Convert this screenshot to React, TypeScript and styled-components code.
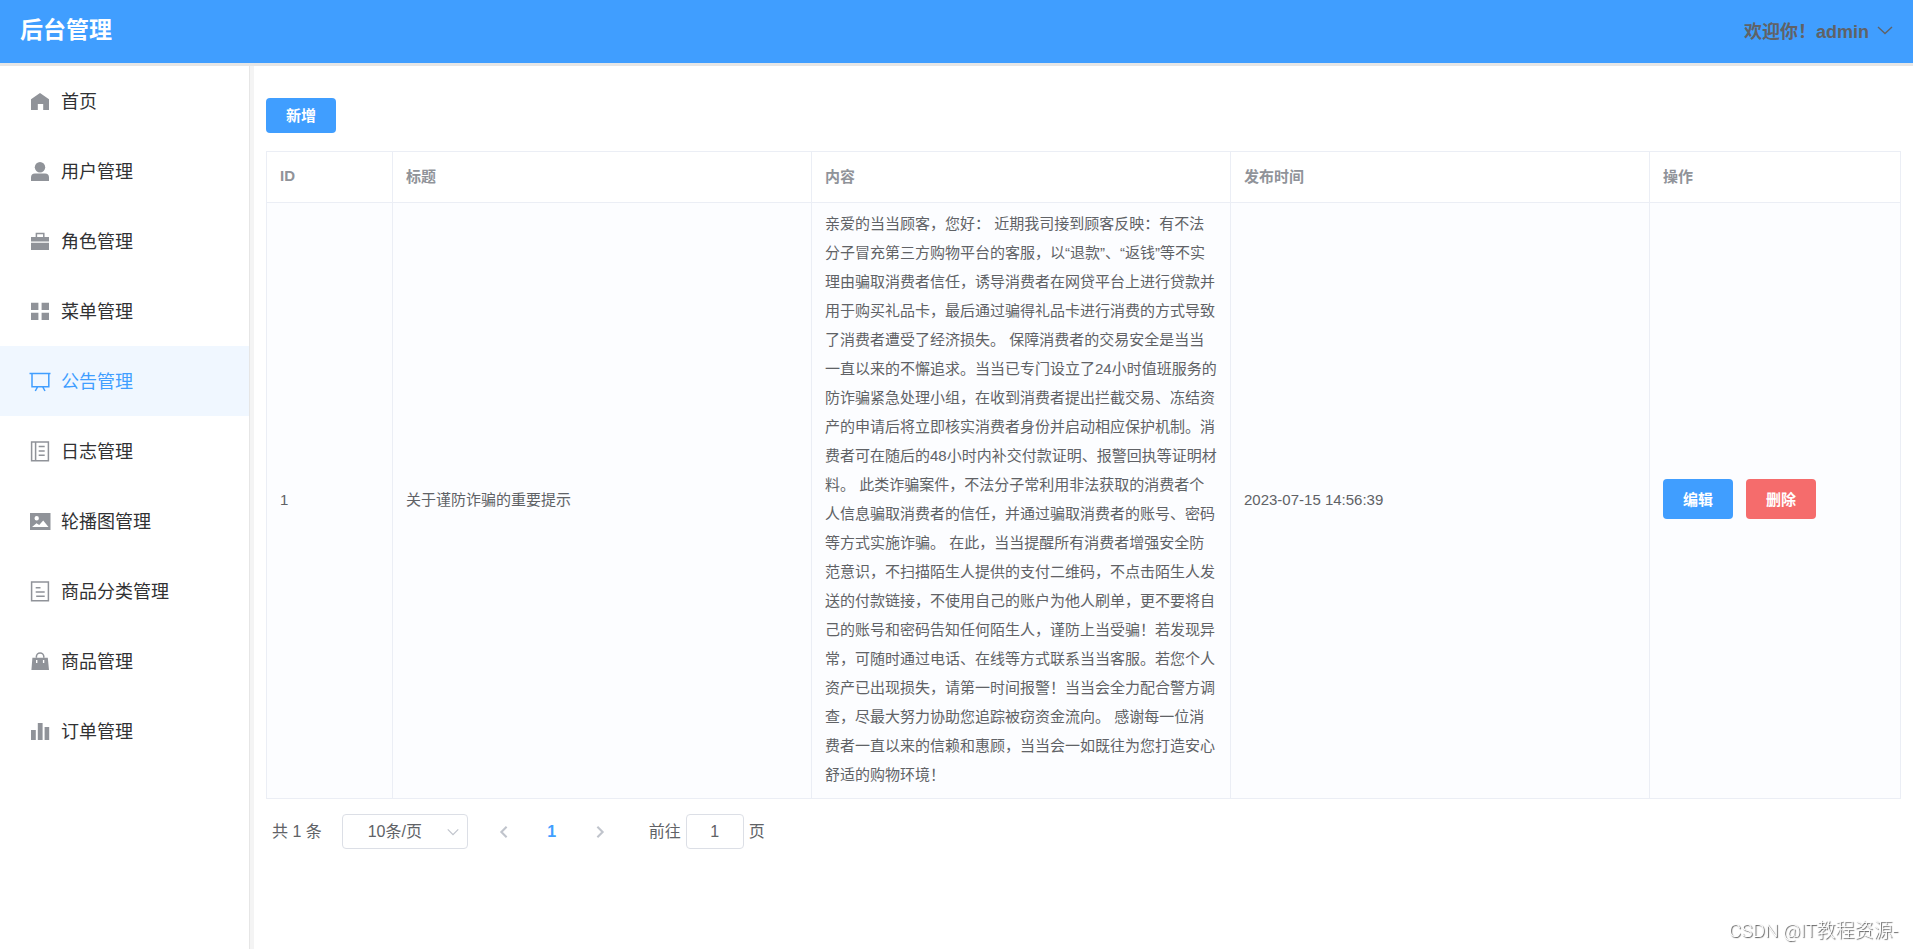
import React from 'react';
import styled, { createGlobalStyle } from 'styled-components';

const GlobalStyle = createGlobalStyle`
  *, *::before, *::after { box-sizing: border-box; }
  body {
    margin: 0;
    background: #fff;
    color: #606266;
    font-family: "Liberation Sans", "Noto Sans CJK SC", sans-serif;
    font-size: 15px;
  }
  button, input, select { font-family: inherit; }
`;

const Page = styled.div`
  display: flex;
  flex-direction: column;
  min-height: 100vh;
`;

const Header = styled.header`
  display: flex;
  align-items: center;
  justify-content: space-between;
  height: 66px;
  padding: 0 20px 4px;
  background: #409eff;
  border-bottom: 3px solid #e6e6e6;
`;

const Title = styled.h1`
  margin: 0;
  font-size: 23px;
  line-height: 32px;
  color: #fff;
`;

const UserButton = styled.button`
  display: flex;
  align-items: center;
  gap: 8px;
  padding: 0;
  border: 0;
  background: none;
  color: #606266;
  font-size: 18px;
  font-weight: 700;
  cursor: pointer;
`;

const Body = styled.div`
  display: flex;
  flex: 1;
`;

const Sidebar = styled.nav`
  flex: 0 0 250px;
  border-right: 1px solid #e6e6e6;
`;

const MenuList = styled.ul`
  margin: 0;
  padding: 0;
  list-style: none;
`;

const MenuLink = styled.a<{ $active: boolean }>`
  display: flex;
  align-items: center;
  gap: 10px;
  height: 70px;
  padding-left: 29px;
  font-size: 18px;
  text-decoration: none;
  color: ${(p) => (p.$active ? '#409eff' : '#303133')};
  background: ${(p) => (p.$active ? '#f0f7ff' : 'transparent')};

  svg {
    color: ${(p) => (p.$active ? '#409eff' : '#909399')};
  }
`;

const MenuLabel = styled.span`
  padding-bottom: 2px;
`;

const Main = styled.main`
  flex: 1;
  min-width: 0;
  padding: 32px 12px;
  border-left: 4px solid #f4f4f4;
`;

const Button = styled.button<{ $tone?: 'primary' | 'danger'; $tall?: boolean }>`
  width: 70px;
  height: ${(p) => (p.$tall ? 40 : 35)}px;
  padding: 0 0 2px;
  border: 0;
  border-radius: 4px;
  background: ${(p) => (p.$tone === 'danger' ? '#f56c6c' : '#409eff')};
  color: #fff;
  font-size: 15px;
  font-weight: 700;
  cursor: pointer;
`;

const Table = styled.table`
  width: 100%;
  margin-top: 18px;
  table-layout: fixed;
  border-collapse: separate;
  border-spacing: 0;
  border-top: 1px solid #ebeef5;
  border-left: 1px solid #ebeef5;
`;

const Col = styled.col<{ $width?: number }>`
  width: ${(p) => (p.$width ? `${p.$width}px` : 'auto')};
`;

const HeadCell = styled.th`
  height: 51px;
  padding: 0 11px 3px 13px;
  border-right: 1px solid #ebeef5;
  border-bottom: 1px solid #ebeef5;
  color: #909399;
  text-align: left;
  font-weight: 700;
`;

const Cell = styled.td`
  padding: 6px 11px 9px 13px;
  border-right: 1px solid #ebeef5;
  border-bottom: 1px solid #ebeef5;
  background: #fcfdff;
  line-height: 29px;
  vertical-align: middle;
`;

const Actions = styled.div`
  display: flex;
  gap: 13px;
`;

const Pagination = styled.div`
  display: flex;
  align-items: center;
  margin-top: 15px;
  padding-left: 6px;
  font-size: 16px;
  line-height: 35px;
`;

const SelectBox = styled.div`
  display: grid;
  align-items: center;
  width: 126px;
  margin: 0 18px 0 20px;

  > * { grid-area: 1 / 1; }
  > svg { justify-self: end; margin-right: 8px; color: #c0c4cc; pointer-events: none; }
`;

const Select = styled.select`
  appearance: none;
  width: 100%;
  height: 35px;
  padding: 0 20px 0 0;
  border: 1px solid #dcdfe6;
  border-radius: 4px;
  background: #fff;
  color: #606266;
  font-size: 16px;
  text-align: center;
  text-align-last: center;
`;

const PageButton = styled.button<{ $current?: boolean }>`
  display: flex;
  align-items: center;
  justify-content: center;
  width: 36px;
  height: 35px;
  padding: 0;
  border: 0;
  background: none;
  color: ${(p) => (p.$current ? '#409eff' : '#c0c4cc')};
  font-size: 16px;
  font-weight: 700;
`;

const Pager = styled.div`
  display: flex;
  gap: 12px;
`;

const Jump = styled.label`
  display: flex;
  gap: 5px;
  margin-left: 31px;
`;

const PageInput = styled.input`
  width: 58px;
  height: 35px;
  padding: 0;
  border: 1px solid #dcdfe6;
  border-radius: 4px;
  color: #606266;
  font-size: 16px;
  text-align: center;
`;

const Watermark = styled.div`
  position: fixed;
  right: 15px;
  bottom: 5px;
  color: #fff;
  font-family: Roboto, "Noto Sans CJK SC", sans-serif;
  font-size: 19px;
  font-weight: 300;
  line-height: 26px;
  text-shadow: 1px 1px 1px #555;
`;

const line = { fill: 'none', stroke: 'currentColor', strokeWidth: 1.5 };

const icons: Record<string, React.ReactNode> = {
  home: <path d="M11 3 20 9.2V20H14.2V14H8.8V20H2V9.2Z" />,
  user: (
    <>
      <circle cx="11" cy="7.2" r="5.2" />
      <path d="M2 21v-3.5a4 4 0 0 1 4-4h10a4 4 0 0 1 4 4V21Z" />
    </>
  ),
  briefcase: (
    <>
      <path d="M7.4 7.5V3.4h7.4v4.1" {...line} />
      <path d="M2 7h18v4.4H2zM2 12.8h18V20H2z" />
    </>
  ),
  grid: <path d="M2 2.8h7.4V10H2zM12.6 2.8H20V10h-7.4zM2 12.8h7.4V20H2zM12.6 12.8H20V20h-7.4z" />,
  board: <path d="M.5 3.5h21M3 3.5V16.7H19.8V3.5M8.7 16.7 6.3 21M13.6 16.7 16 21" {...line} />,
  notebook: <path d="M2.6 2h16.8v18.8H2.6zM6.6 2v18.8M9.7 6.6h6M9.7 11h6M9.7 15.2h6" {...line} />,
  picture: (
    <path
      fillRule="evenodd"
      d="M1 3h20.5v17H1zM7.7 6a2.2 2.2 0 1 0 0 4.4 2.2 2.2 0 0 0 0-4.4zM3 17h16.5l-5.3-6.6-4 4.5-2.7-1.7z"
    />
  ),
  tickets: <path d="M2.6 2h16.8v18.8H2.6zM6.7 7.7h4.8M6.7 12h9M7.2 16.2h8.5" {...line} />,
  goods: (
    <>
      <path d="M7.4 7.8V6.6a3.7 3.7 0 0 1 7.4 0v1.2" {...line} />
      <path fillRule="evenodd" d="M3.4 7.8h15.4L20 20H2.4zM7 10v3h1.4v-3zM13.9 10v3h1.4v-3z" />
    </>
  ),
  chart: <path d="M2 10h4.8v10H2zM8.8 3h4.8v17H8.8zM15.6 7h4.6v13h-4.6z" />,
};

const MenuIcon = ({ name }: { name: string }) => (
  <svg width="22" height="22" viewBox="0 0 22 22" fill="currentColor" aria-hidden="true">
    {icons[name]}
  </svg>
);

const Chevron = ({ d, size, width }: { d: string; size: number; width: number }) => (
  <svg width={size} height={size} viewBox="0 0 16 16" fill="none" stroke="currentColor" strokeWidth={width} aria-hidden="true">
    <path d={d} />
  </svg>
);

const menu = [
  { icon: 'home', label: '首页' },
  { icon: 'user', label: '用户管理' },
  { icon: 'briefcase', label: '角色管理' },
  { icon: 'grid', label: '菜单管理' },
  { icon: 'board', label: '公告管理' },
  { icon: 'notebook', label: '日志管理' },
  { icon: 'picture', label: '轮播图管理' },
  { icon: 'tickets', label: '商品分类管理' },
  { icon: 'goods', label: '商品管理' },
  { icon: 'chart', label: '订单管理' },
];

const notices = [
  {
    id: 1,
    title: '关于谨防诈骗的重要提示',
    content:
      '亲爱的当当顾客，您好： 近期我司接到顾客反映：有不法分子冒充第三方购物平台的客服，以“退款”、“返钱”等不实理由骗取消费者信任，诱导消费者在网贷平台上进行贷款并用于购买礼品卡，最后通过骗得礼品卡进行消费的方式导致了消费者遭受了经济损失。 保障消费者的交易安全是当当一直以来的不懈追求。当当已专门设立了24小时值班服务的防诈骗紧急处理小组，在收到消费者提出拦截交易、冻结资产的申请后将立即核实消费者身份并启动相应保护机制。消费者可在随后的48小时内补交付款证明、报警回执等证明材料。 此类诈骗案件，不法分子常利用非法获取的消费者个人信息骗取消费者的信任，并通过骗取消费者的账号、密码等方式实施诈骗。 在此，当当提醒所有消费者增强安全防范意识，不扫描陌生人提供的支付二维码，不点击陌生人发送的付款链接，不使用自己的账户为他人刷单，更不要将自己的账号和密码告知任何陌生人，谨防上当受骗！若发现异常，可随时通过电话、在线等方式联系当当客服。若您个人资产已出现损失，请第一时间报警！当当会全力配合警方调查，尽最大努力协助您追踪被窃资金流向。 感谢每一位消费者一直以来的信赖和惠顾，当当会一如既往为您打造安心舒适的购物环境！',
    time: '2023-07-15 14:56:39',
  },
];

export default function App() {
  return (
    <Page lang="zh-CN">
      <GlobalStyle />
      <Header>
        <Title>后台管理</Title>
        <UserButton type="button">
          欢迎你！admin
          <Chevron d="M1 5 8 11.5 15 5" size={16} width={1.4} />
        </UserButton>
      </Header>
      <Body>
        <Sidebar aria-label="主菜单">
          <MenuList>
            {menu.map((item) => (
              <li key={item.label}>
                <MenuLink href="#" $active={item.label === '公告管理'}>
                  <MenuIcon name={item.icon} />
                  <MenuLabel>{item.label}</MenuLabel>
                </MenuLink>
              </li>
            ))}
          </MenuList>
        </Sidebar>
        <Main>
          <Button type="button">新增</Button>
          <Table>
            <colgroup>
              <Col $width={126} />
              <Col />
              <Col />
              <Col />
              <Col $width={251} />
            </colgroup>
            <thead>
              <tr>
                {['ID', '标题', '内容', '发布时间', '操作'].map((name) => (
                  <HeadCell key={name} scope="col">{name}</HeadCell>
                ))}
              </tr>
            </thead>
            <tbody>
              {notices.map((notice) => (
                <tr key={notice.id}>
                  <Cell>{notice.id}</Cell>
                  <Cell>{notice.title}</Cell>
                  <Cell>{notice.content}</Cell>
                  <Cell>{notice.time}</Cell>
                  <Cell>
                    <Actions>
                      <Button type="button" $tall>编辑</Button>
                      <Button type="button" $tone="danger" $tall>删除</Button>
                    </Actions>
                  </Cell>
                </tr>
              ))}
            </tbody>
          </Table>
          <Pagination>
            <span>共 1 条</span>
            <SelectBox>
              <Select aria-label="每页条数" defaultValue="10">
                <option value="10">10条/页</option>
                <option value="20">20条/页</option>
              </Select>
              <Chevron d="M2 5 8 11 14 5" size={14} width={1.4} />
            </SelectBox>
            <Pager>
              <PageButton type="button" aria-label="上一页">
                <Chevron d="M11 2 5 8 11 14" size={14} width={2.4} />
              </PageButton>
              <PageButton type="button" $current>1</PageButton>
              <PageButton type="button" aria-label="下一页">
                <Chevron d="M5 2 11 8 5 14" size={14} width={2.4} />
              </PageButton>
            </Pager>
            <Jump>
              前往
              <PageInput type="text" defaultValue="1" />
              页
            </Jump>
          </Pagination>
        </Main>
      </Body>
      <Watermark>CSDN @IT教程资源-</Watermark>
    </Page>
  );
}
